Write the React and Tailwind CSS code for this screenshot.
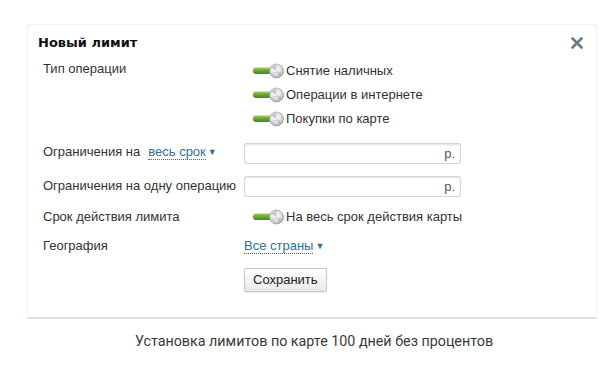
import React from 'react';

const Toggle = () => (
  <svg width="32" height="16" viewBox="0 0 32 16" className="shrink-0">
    <defs>
      <linearGradient id="bar" x1="0" y1="0" x2="0" y2="1">
        <stop offset="0" stopColor="#9ccf5a" />
        <stop offset="0.5" stopColor="#6aa632" />
        <stop offset="1" stopColor="#4c8420" />
      </linearGradient>
      <radialGradient id="knob" cx="0.45" cy="0.4" r="0.6">
        <stop offset="0" stopColor="#ffffff" />
        <stop offset="0.6" stopColor="#e2e2e2" />
        <stop offset="1" stopColor="#a9a9a9" />
      </radialGradient>
    </defs>
    <rect x="0" y="4.5" width="20" height="6.5" rx="3" fill="url(#bar)" />
    <circle cx="23.5" cy="8" r="7" fill="url(#knob)" stroke="#a2a2a2" strokeWidth="0.8" />
    <path d="M23.5 1.5 L23.5 8 L18 4.5 Z" fill="#bdbdbd" opacity="0.8" />
    <path d="M23.5 8 L29.5 10.5 L26 14.2 Z" fill="#b8b8b8" opacity="0.8" />
    <path d="M23.5 8 L17.5 11 L21 14.4 Z" fill="#c8c8c8" opacity="0.6" />
  </svg>
);

const ToggleItem = ({ children }) => (
  <div className="flex items-center h-[24px] pl-[9px]">
    <Toggle />
    <span className="ml-[1px]">{children}</span>
  </div>
);

const Amount = () => (
  <div className="flex items-center w-[217px] h-[21px] border border-[#d6d6d6] rounded-[2px] bg-white shadow-[inset_0_1px_2px_rgba(0,0,0,0.12)]">
    <div className="flex-1" />
    <span className="pr-[5px] text-[#555]">р.</span>
  </div>
);

const Drop = ({ children }) => (
  <span className="text-[#2f6f99] cursor-pointer">
    <span className="border-b border-dotted border-[#2f6f99]">{children}</span>
    <span className="text-[9px] ml-[2px] align-[1px]">▼</span>
  </span>
);

const App = () => {
  return (
    <div className="w-[612px] h-[365px] bg-white pt-[24px]" style={{ fontFamily: '"Liberation Sans", Arial, sans-serif' }}>
      <div className="ml-[27px] w-[570px] h-[295px] border border-[#eef1f4] border-b-[2px] border-b-[#dde3e8] pt-[10px] text-[13px] text-[#333]">
        <div className="flex items-center justify-between pl-[10px] pr-[13px] h-[16px]">
          <span className="font-bold text-[13px] text-[#111]" style={{ fontFamily: '"DejaVu Sans", Verdana, sans-serif' }}>
            Новый лимит
          </span>
          <svg width="12" height="12" viewBox="0 0 12 12">
            <path d="M1.5 1.5 L10.5 10.5 M10.5 1.5 L1.5 10.5" stroke="#6a7986" strokeWidth="2.6" strokeLinecap="round" />
          </svg>
        </div>

        <div className="pl-[15px]">
          <div className="grid grid-cols-[201px_1fr] mt-[8px]">
            <div className="pt-[2px] leading-[16px]">Тип операции</div>
            <div>
              <ToggleItem>Снятие наличных</ToggleItem>
              <ToggleItem>Операции в интернете</ToggleItem>
              <ToggleItem>Покупки по карте</ToggleItem>
            </div>
          </div>

          <div className="grid grid-cols-[201px_1fr] items-center mt-[12px] h-[21px]">
            <div className="flex items-center -mt-[4px]">
              <span>Ограничения на</span>
              <span className="ml-[8px]">
                <Drop>весь срок</Drop>
              </span>
            </div>
            <Amount />
          </div>

          <div className="grid grid-cols-[201px_1fr] items-center mt-[12px] h-[21px]">
            <div className="-mt-[1px]">Ограничения на одну операцию</div>
            <Amount />
          </div>

          <div className="grid grid-cols-[201px_1fr] items-center mt-[8px] h-[20px]">
            <div>Срок действия лимита</div>
            <div>
              <ToggleItem>На весь срок действия карты</ToggleItem>
            </div>
          </div>

          <div className="grid grid-cols-[201px_1fr] items-center mt-[11px] h-[20px]">
            <div>География</div>
            <div>
              <Drop>Все страны</Drop>
            </div>
          </div>

          <div className="grid grid-cols-[201px_1fr] mt-[12px]">
            <div />
            <div>
              <button className="h-[24px] px-[8px] border border-[#c6c6c6] rounded-[2px] bg-gradient-to-b from-white to-[#e9e9e9] text-[13px] text-[#222] shadow-[0_1px_1px_rgba(0,0,0,0.08)]">
                Сохранить
              </button>
            </div>
          </div>
        </div>
      </div>

      <div className="text-center mt-[12px] pl-[16px] text-[14.3px] text-[#3a3a3a]" style={{ fontFamily: 'Roboto, "Noto Sans", sans-serif' }}>
        Установка лимитов по карте 100 дней без процентов
      </div>
    </div>
  );
};

export default App;
